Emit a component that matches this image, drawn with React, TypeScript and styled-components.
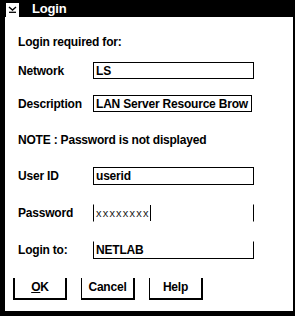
import React from 'react';
import styled, { createGlobalStyle } from 'styled-components';

const GlobalStyle = createGlobalStyle`
	html, body {
		margin: 0;
		padding: 0;
		background: #000;
	}
	body {
		font-family: "Liberation Sans", Arial, sans-serif;
	}
`;

const Frame = styled.div`
	width: 295px;
	height: 316px;
	background: #000;
	display: flex;
	flex-direction: column;
	box-sizing: border-box;
	padding: 0 2px 5px 5px;
`;

const TitleBar = styled.div`
	height: 17px;
	display: flex;
	align-items: center;
	flex-shrink: 0;
`;

const SysMenu = styled.div`
	width: 13px;
	height: 14px;
	margin: 2px 0 0 1px;
	background: #fff;
	display: flex;
	align-items: center;
	justify-content: center;
`;

const Title = styled.div`
	color: #fff;
	font-weight: bold;
	font-size: 13px;
	margin-left: 13px;
	letter-spacing: -0.2px;
`;

const Client = styled.div`
	flex: 1;
	background: #fff;
	display: flex;
	flex-direction: column;
	padding-top: 17px;
	font-weight: bold;
	font-size: 12px;
	color: #000;
	letter-spacing: -0.2px;
`;

const Text = styled.div`
	margin-left: 13px;
	white-space: nowrap;
`;

const Row = styled.div<{ $h: number; $mt: number }>`
	display: flex;
	align-items: center;
	height: ${({ $h }) => $h}px;
	margin-top: ${({ $mt }) => $mt}px;
	flex-shrink: 0;
`;

const Label = styled(Text)`
	width: 75px;
`;

type Edges = 'box' | 'open' | 'sides';

const Field = styled.div<{ $edges: Edges; $w?: number }>`
	box-sizing: border-box;
	width: ${({ $w }) => $w ?? 161}px;
	height: 100%;
	border: 1px solid #000;
	${({ $edges }) => ($edges === 'open' ? 'border-top-color: transparent;' : '')}
	${({ $edges }) =>
		$edges === 'sides' ? 'border-top-color: transparent; border-bottom-color: transparent;' : ''}
	display: flex;
	align-items: center;
	padding-left: 2px;
	white-space: nowrap;
`;

const Mask = styled.span`
	font-weight: normal;
	letter-spacing: 1.2px;
	font-size: 11px;
	color: #222;
`;

const Caret = styled.span`
	display: inline-block;
	width: 1px;
	height: 16px;
	background: #000;
`;

const ButtonRow = styled.div`
	display: flex;
	gap: 14px;
	margin: 19px 0 0 8px;
	height: 22px;
`;

const Button = styled.div<{ $default?: boolean }>`
	box-sizing: border-box;
	width: 54px;
	height: 22px;
	border: solid #000;
	border-width: ${({ $default }) => ($default ? '0 2px 2px 2px' : '0 2px 2px 1px')};
	display: flex;
	align-items: center;
	justify-content: center;
	padding-bottom: 2px;
`;

const Mnemonic = styled.span`
	text-decoration: underline;
	text-underline-offset: 1px;
`;

export default function App() {
	return (
		<>
			<GlobalStyle />
			<Frame>
				<TitleBar>
					<SysMenu>
						<svg width="9" height="7" viewBox="0 0 9 7">
							<polyline points="1,1 4.5,4 8,1" fill="none" stroke="#000" strokeWidth="1.4" />
							<line x1="1" y1="6.3" x2="8" y2="6.3" stroke="#000" strokeWidth="1.3" />
						</svg>
					</SysMenu>
					<Title>Login</Title>
				</TitleBar>
				<Client>
					<Row $h={16} $mt={0}>
						<Text>Login required for:</Text>
					</Row>
					<Row $h={17} $mt={12}>
						<Label>Network</Label>
						<Field $edges="box">LS</Field>
					</Row>
					<Row $h={17} $mt={16}>
						<Label>Description</Label>
						<Field $edges="box" $w={159}>LAN Server Resource Brow</Field>
					</Row>
					<Row $h={16} $mt={20}>
						<Text>NOTE : Password is not displayed</Text>
					</Row>
					<Row $h={18} $mt={19}>
						<Label>User ID</Label>
						<Field $edges="box">userid</Field>
					</Row>
					<Row $h={18} $mt={19}>
						<Label>Password</Label>
						<Field $edges="sides">
							<Mask>xxxxxxxx</Mask>
							<Caret />
						</Field>
					</Row>
					<Row $h={18} $mt={19}>
						<Label>Login to:</Label>
						<Field $edges="open">NETLAB</Field>
					</Row>
					<ButtonRow>
						<Button $default>
							<Mnemonic>O</Mnemonic>K
						</Button>
						<Button>Cancel</Button>
						<Button>Help</Button>
					</ButtonRow>
				</Client>
			</Frame>
		</>
	);
}
